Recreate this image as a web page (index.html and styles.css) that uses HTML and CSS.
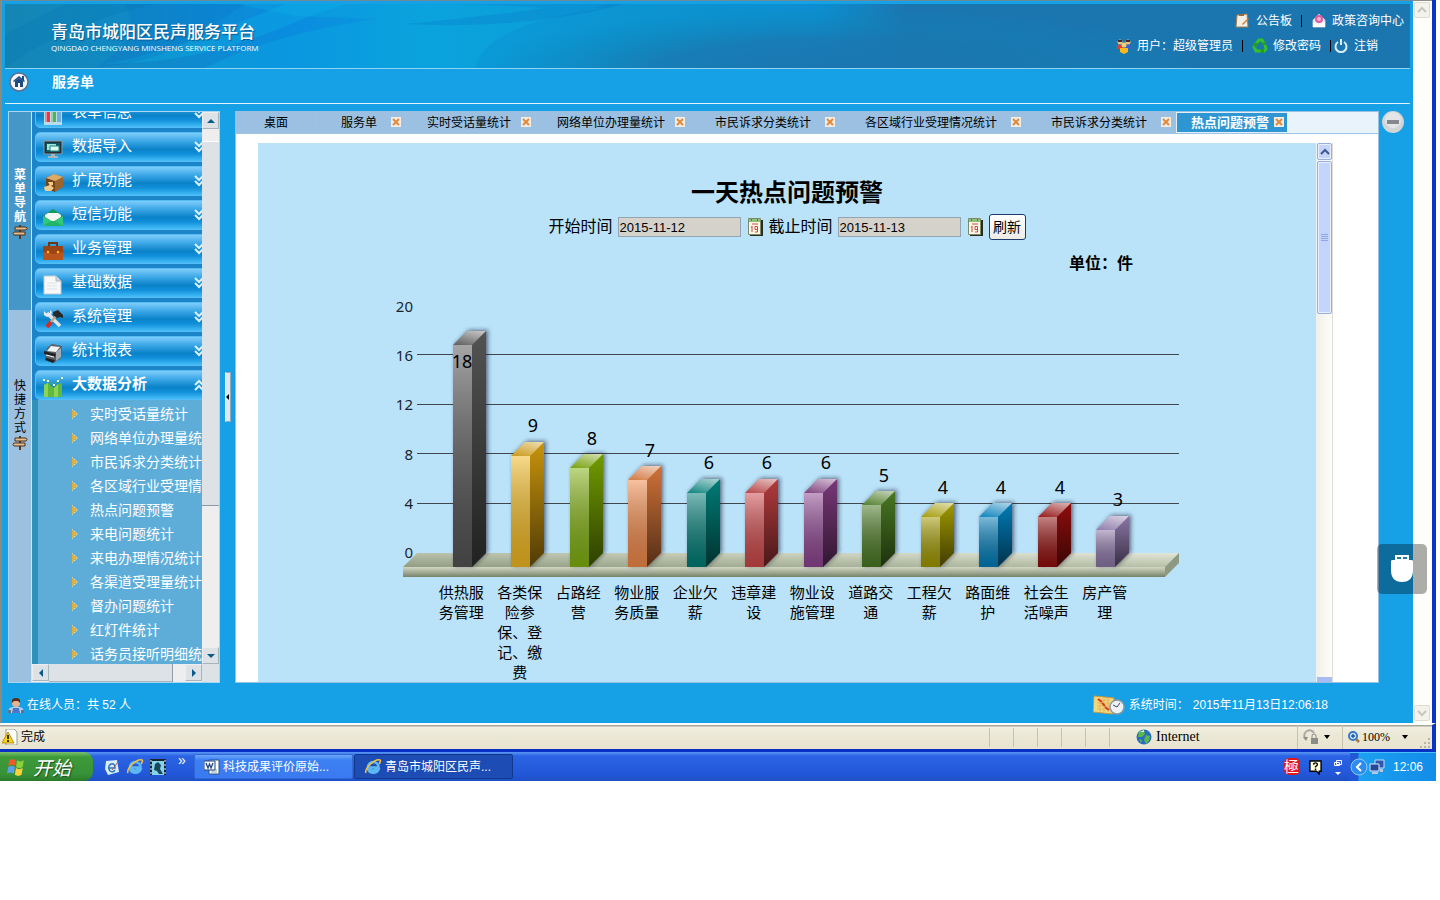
FILE: index.html
```html
<!DOCTYPE html>
<html lang="zh-CN">
<head>
<meta charset="utf-8">
<title>青岛市城阳区民声服务平台</title>
<link rel="stylesheet" href="styles.css">
</head>
<body>
<svg class="defs" aria-hidden="true">
  <defs>
    <symbol id="i-sign" viewBox="0 0 16 16"><path d="M7 1h2v14H7z" fill="#5b3a1e"/><path d="M3 3h11l1 1.500-1 1.500H3zM13 8H2L1 9.500 2 11h11z" fill="#e8bd92" stroke="#4d3018"/></symbol>
    <symbol id="i-down" viewBox="0 0 10 12"><path d="M1 1l4 4 4-4M1 6l4 4 4-4" fill="none" stroke="#d8f2ff" stroke-width="2"/></symbol>
    <symbol id="i-up" viewBox="0 0 10 12"><path d="M1 6l4-4 4 4M1 11l4-4 4 4" fill="none" stroke="#d8f2ff" stroke-width="2"/></symbol>
    <symbol id="i-x" viewBox="0 0 12 12"><path d="M1 0h10v10H1z" fill="#f1ece4"/><path d="M3 2l6 6M9 2L3 8" stroke="#e08a3c" stroke-width="2"/></symbol>
    <symbol id="i-cal" viewBox="0 0 15 18"><path d="M2 2h13v16H2z" fill="#2b2b20"/><path d="M.5.500h12v16H.500z" fill="#fbf7e8" stroke="#7c8a68"/><path d="M1 1h11v3H1z" fill="#8dc07a"/><path d="M3 2h1M9 2h1" stroke="#234"/><path d="M4 6h6M4 8v6M3 9h1M9.500 8.500H7v3h2.500zM9.500 11v3H7" fill="none" stroke="#cf4a40"/></symbol>
    <symbol id="i-ie" viewBox="0 0 18 18"><path d="M3.500 9.500h11C14.500 2 4 2.500 4 9.500c0 6.500 8.500 6.500 10.500 2h-3.500c-1.500 2-5 1-4.500-2" fill="none" stroke="#5db7f5" stroke-width="2.600"/><path d="M2 15C0 11 11 0 16 2c1 .5 0 3-1 4" fill="none" stroke="#f2c13c" stroke-width="1.600"/></symbol>
    <symbol id="i-dot" viewBox="0 0 8 12"><path d="M1 1l6 5-6 5z" fill="#f9efb0"/><path d="M1 3h2M1 5h4M1 7h4M1 9h2M2 2v8M4 4v4M6 5v2" stroke="#d59a18"/></symbol>
    <linearGradient id="g-front" x2="0" y2="1"><stop stop-color="#fff" stop-opacity=".48"/><stop offset="1" stop-color="#000" stop-opacity=".2"/></linearGradient>
    <linearGradient id="g-side" x2="0" y2="1"><stop stop-color="#000" stop-opacity="0"/><stop offset="1" stop-color="#000" stop-opacity=".6"/></linearGradient>
    <linearGradient id="g-top" x1=".2" y1="1" x2=".8" y2="0"><stop stop-color="#fff" stop-opacity=".1"/><stop offset="1" stop-color="#fff" stop-opacity=".65"/></linearGradient>
    <linearGradient id="g-floor" x1="0" y1="1" x2="1" y2="0"><stop stop-color="#919d83"/><stop offset=".5" stop-color="#b8c0a9"/><stop offset="1" stop-color="#e2e6d7"/></linearGradient>
    <linearGradient id="g-edge" x2="0" y2="1"><stop stop-color="#d2d7c4"/><stop offset="1" stop-color="#77826a"/></linearGradient>
    <linearGradient id="g-head"><stop stop-color="#1586b4"/><stop offset=".1" stop-color="#0f8ac8"/><stop offset=".2" stop-color="#0a8cdf"/><stop offset=".3" stop-color="#0a9cdc"/><stop offset=".45" stop-color="#0c94d0"/><stop offset=".58" stop-color="#0d8ed0"/><stop offset=".64" stop-color="#1b76b0"/><stop offset="1" stop-color="#1b76b0"/></linearGradient>
    <radialGradient id="g-headdark"><stop stop-color="#1b76b0"/><stop offset=".5" stop-color="#1a78b0" stop-opacity=".8"/><stop offset="1" stop-color="#0c88b8" stop-opacity="0"/></radialGradient>
    <filter id="shade" x="-30%" y="-10%" width="170%" height="120%"><feDropShadow dx="2" dy="-1" stdDeviation="2" flood-color="#223" flood-opacity=".6"/></filter>
  </defs>
</svg>

<div class="screen">
  <div class="browser">
    <div class="app">
      <header class="banner">
        <svg class="banner-art" viewBox="0 0 1405 64" preserveAspectRatio="none" aria-hidden="true">
          <path d="M0 0h1405v64H0z" fill="url(#g-head)"/>
          <ellipse cx="830" cy="66" rx="360" ry="62" fill="url(#g-headdark)"/>
          <path d="M230 0H600Q540 20 450 18 Q350 14 290 12zM200 64Q300 12 500 4L600 4Q480 20 470 64z" fill="#0cb4e2" opacity=".3"/>
          <path d="M300 14L340 0H280Q160 50 100 60Q200 60 300 14z" fill="#0cc0ea" opacity=".25"/>
          <path d="M430 0H620Q520 26 400 20Q500 10 540 4Q480 0 430 0zM120 0h120l-60 40q-40 20-90 24 50-30 30-64z" fill="#0670c8" opacity=".25"/>
          <path d="M0 64Q60 20 150 0H60L0 30z" fill="#0678b4" opacity=".3"/>
        </svg>
        <div class="brand">
          <h1 class="brand-name">青岛市城阳区民声服务平台</h1>
          <p class="brand-en">QINGDAO CHENGYANG MINSHENG SERVICE PLATFORM</p>
        </div>
        <div class="account">
          <div class="account-row">
            <svg class="ic16" viewBox="0 0 16 16"><path d="M2 2l10-1 1 13H1z" fill="#f2efe6" stroke="#a77b4a"/><path d="M4 1h5v2H4z" fill="#9a6a3c"/><path d="M7 11l6-6 1 1-6 6z" fill="#d97b2d"/></svg>
            <a href="#">公告板</a><span class="bar-sep"></span>
            <svg class="ic16" viewBox="0 0 16 16"><path d="M2 7l6-6 6 6v7H2z" fill="#efeff6" stroke="#c2c4d4"/><circle cx="8" cy="6" r="4" fill="#e05aa0"/><circle cx="8" cy="6" r="2" fill="#f8b6d4"/><path d="M2 9l6 3 6-3v5H2z" fill="#fff"/></svg>
            <a href="#">政策咨询中心</a>
          </div>
          <div class="account-row account-row-user">
            <svg class="ic16" viewBox="0 0 16 16"><circle cx="4" cy="4" r="2.500" fill="#f0c080"/><circle cx="12" cy="4" r="2.500" fill="#f0c080"/><path d="M2 2h4v2H2zM10 2h4v2h-4z" fill="#4a2a20"/><path d="M1 7h6v4H1z" fill="#e04030"/><path d="M9 7h6v4H9z" fill="#3a62c8"/><circle cx="8" cy="7" r="2.500" fill="#f5cf7a"/><path d="M4 10h8v4l-4 2-4-2z" fill="#f6b81c"/></svg>
            <span>用户：超级管理员</span><span class="bar-sep"></span>
            <svg class="ic16" viewBox="0 0 16 16"><path d="M4 6l3-4h3l2 3M13 7l1 4-3 3M9 13H4l-2-4 2-2" fill="none" stroke="#35c02c" stroke-width="3"/><path d="M14 2v5H9zM12 10l-4 3 4 3zM1 5h6L3 10z" fill="#239c20"/></svg>
            <a href="#">修改密码</a><span class="bar-sep bar-sep-tight"></span>
            <svg class="ic16" viewBox="0 0 16 16"><path d="M5 4a5.500 5.500 0 1 0 6 0M8 1v6" fill="none" stroke="#d9edf6" stroke-width="2"/></svg>
            <a href="#">注销</a>
          </div>
        </div>
      </header>

      <nav class="crumb">
        <svg class="home" viewBox="0 0 20 20"><circle cx="10" cy="10" r="9" fill="#f4f5f8" stroke="#5c6e90" stroke-width="1.500"/><path d="M10 4l6 5-1 1-5-4-5 4-1-1z" fill="#1d4a80"/><path d="M13 4h2v4h-2z" fill="#1d4a80"/><path d="M6 9l4-3 4 3v6h-3v-4H9v4H6z" fill="#1d4a80"/></svg>
        <a href="#" class="crumb-link">服务单</a>
      </nav>

      <div class="work">
        <aside class="side">
          <div class="rail">
            <button class="rail-tab rail-tab-on"><span class="rail-text">菜单导航</span><svg class="ic16"><use href="#i-sign"/></svg></button>
            <button class="rail-tab"><span class="rail-text">快捷方式</span><svg class="ic16"><use href="#i-sign"/></svg></button>
          </div>
          <div class="side-view">
            <div class="side-body">
              <div class="menu">
                <ul class="menu-list">
                  <li><button class="menu-item"><svg class="mi" viewBox="0 0 20 20"><path d="M1 0h18v20H1z" fill="#b9dcef"/><path d="M2 6h5v11H2z" fill="#e23b4a"/><path d="M8 4h5v13H8z" fill="#4eb35c"/><path d="M14 2h4v15h-4z" fill="#72acd8"/><path d="M2 6h2v11H2zM8 4h2v13H8z" fill="#fff" opacity=".4"/></svg><span class="menu-name">表单信息</span><svg class="chev"><use href="#i-down"/></svg></button></li>
                  <li><button class="menu-item"><svg class="mi" viewBox="0 0 20 20"><path d="M1 2h18v13H1z" fill="#23323a" stroke="#8aa0a8"/><path d="M3 4h14v9H3z" fill="#0d5a66"/><path d="M4 5h9v6H4z" fill="#9be8d8"/><path d="M7 7h9v5H7z" fill="#d8fff2" stroke="#2a7d7a"/><path d="M8 15h4v2h3v2H5v-2h3z" fill="#a8b4ba"/></svg><span class="menu-name">数据导入</span><svg class="chev"><use href="#i-down"/></svg></button></li>
                  <li><button class="menu-item"><svg class="mi" viewBox="0 0 20 20"><path d="M3 5l8-4 9 3v10l-8 5-9-4z" fill="#9a642c"/><path d="M3 5l9 3v11l-9-4z" fill="#714317"/><path d="M3 5l8-4 9 3-8 4z" fill="#dcab68"/><path d="M5 9h5v3l-3 1zM1 14l6-2 4 3-3 3-6 0z" fill="#f0c98c"/></svg><span class="menu-name">扩展功能</span><svg class="chev"><use href="#i-down"/></svg></button></li>
                  <li><button class="menu-item"><svg class="mi" viewBox="0 0 20 20"><path d="M0 9l10-7 10 7v10H0z" fill="#159a58"/><path d="M2 8l3-2h10l3 2v2l-8 5-8-5z" fill="#f5f7f4"/><path d="M0 9l10 6 10-6v10H0z" fill="#30c87a"/><path d="M0 19l8-5h4l8 5z" fill="#22b469"/></svg><span class="menu-name">短信功能</span><svg class="chev"><use href="#i-down"/></svg></button></li>
                  <li><button class="menu-item"><svg class="mi" viewBox="0 0 20 20"><path d="M6 5V2h8v3" fill="none" stroke="#6d3514" stroke-width="2"/><path d="M0 5h20v14H0z" fill="#b8541c"/><path d="M0 5h20v6l-10 2L0 11z" fill="#9a4315"/><circle cx="5" cy="11" r="1.300" fill="#f3b62c"/><circle cx="15" cy="11" r="1.300" fill="#f3b62c"/></svg><span class="menu-name">业务管理</span><svg class="chev"><use href="#i-down"/></svg></button></li>
                  <li><button class="menu-item"><svg class="mi" viewBox="0 0 20 20"><path d="M1 1h12l5 5v13H1z" fill="#f8f8f8" stroke="#c4ccd2"/><path d="M13 1v5h5" fill="#d2d8dc" stroke="#adb7be"/><path d="M4 8h10M4 11h10M4 14h10" stroke="#dde3e8"/></svg><span class="menu-name">基础数据</span><svg class="chev"><use href="#i-down"/></svg></button></li>
                  <li><button class="menu-item"><svg class="mi" viewBox="0 0 20 20"><path d="M4 4l13 13" stroke="#dfe3e6" stroke-width="3.500"/><path d="M1 2v4l3 2 4-2 1-3-2-2v3l-3 1z" fill="#e8ecee"/><path d="M13 7l-6 7" stroke="#c9a98a" stroke-width="2.500"/><path d="M8 13l-4 5" stroke="#d82a20" stroke-width="4"/><path d="M10 3l5-2 5 5v3l-3-1-3 1-4-3z" fill="#26282a"/></svg><span class="menu-name">系统管理</span><svg class="chev"><use href="#i-down"/></svg></button></li>
                  <li><button class="menu-item"><svg class="mi" viewBox="0 0 20 20"><path d="M4 5l5-4 10 2-1 12-7 5-9-4z" fill="#5a6064"/><path d="M8 3l9 1-4 5-9-1z" fill="#f0f2f3"/><path d="M1 8l12 3-1 3-11-3zM3 15l9 2-2 3-8-3z" fill="#1f2326"/><path d="M13 9l5-4v9l-5 4z" fill="#a4abb0"/><path d="M3 12l8 2" stroke="#fff"/></svg><span class="menu-name">统计报表</span><svg class="chev"><use href="#i-down"/></svg></button></li>
                  <li><button class="menu-item menu-item-open"><svg class="mi" viewBox="0 0 20 20"><path d="M1 8l4-2 6 5 4-4 4-1v14H1z" fill="#62b83c"/><path d="M1 8l4-2v14H1zM11 11l4-4v13h-4z" fill="#8ad45a"/><path d="M1 3l4 1 6 4 4-4 4-3" fill="none" stroke="#5db04a"/><path d="M0 2h2v2H0zM4 3h2v2H4zM10 7h2v2h-2zM14 3h2v2h-2zM18 0h2v2h-2z" fill="#e8ffe0"/></svg><span class="menu-name">大数据分析</span><svg class="chev"><use href="#i-up"/></svg></button>
                    <ul class="sub">
                      <li><a href="#"><svg class="dot"><use href="#i-dot"/></svg>实时受话量统计</a></li>
                      <li><a href="#"><svg class="dot"><use href="#i-dot"/></svg>网络单位办理量统计</a></li>
                      <li><a href="#"><svg class="dot"><use href="#i-dot"/></svg>市民诉求分类统计</a></li>
                      <li><a href="#"><svg class="dot"><use href="#i-dot"/></svg>各区域行业受理情况统计</a></li>
                      <li><a href="#"><svg class="dot"><use href="#i-dot"/></svg>热点问题预警</a></li>
                      <li><a href="#"><svg class="dot"><use href="#i-dot"/></svg>来电问题统计</a></li>
                      <li><a href="#"><svg class="dot"><use href="#i-dot"/></svg>来电办理情况统计</a></li>
                      <li><a href="#"><svg class="dot"><use href="#i-dot"/></svg>各渠道受理量统计</a></li>
                      <li><a href="#"><svg class="dot"><use href="#i-dot"/></svg>督办问题统计</a></li>
                      <li><a href="#"><svg class="dot"><use href="#i-dot"/></svg>红灯件统计</a></li>
                      <li><a href="#"><svg class="dot"><use href="#i-dot"/></svg>话务员接听明细统计</a></li>
                    </ul>
                  </li>
                </ul>
              </div>
              <div class="vbar">
                <button class="sb" aria-label="向上"><svg viewBox="0 0 8 8"><path d="M0 6l4-4 4 4z"/></svg></button>
                <span class="vbar-gap"></span><span class="vbar-thumb"></span><span class="vbar-rest"></span>
                <button class="sb" aria-label="向下"><svg viewBox="0 0 8 8"><path d="M0 2l4 4 4-4z"/></svg></button>
              </div>
            </div>
            <div class="hbar">
              <button class="sb" aria-label="向左"><svg viewBox="0 0 8 8"><path d="M6 0L2 4l4 4z"/></svg></button>
              <span class="hbar-thumb"></span><span class="hbar-rest"></span>
              <button class="sb" aria-label="向右"><svg viewBox="0 0 8 8"><path d="M2 0l4 4-4 4z"/></svg></button>
              <span class="hbar-corner"></span>
            </div>
          </div>
        </aside>

        <button class="splitter" aria-label="收起菜单"><svg viewBox="0 0 4 8"><path d="M4 0L0 4l4 4z"/></svg></button>

        <main class="main">
          <div class="tabs">
            <div class="tab tab-home"><button class="tab-name">桌面</button></div>
            <div class="tab"><button class="tab-name">服务单</button><button class="tab-x" aria-label="关闭"><svg><use href="#i-x"/></svg></button></div>
            <div class="tab tab-tight"><button class="tab-name">实时受话量统计</button><button class="tab-x" aria-label="关闭"><svg><use href="#i-x"/></svg></button></div>
            <div class="tab tab-tight"><button class="tab-name">网络单位办理量统计</button><button class="tab-x" aria-label="关闭"><svg><use href="#i-x"/></svg></button></div>
            <div class="tab"><button class="tab-name">市民诉求分类统计</button><button class="tab-x" aria-label="关闭"><svg><use href="#i-x"/></svg></button></div>
            <div class="tab"><button class="tab-name">各区域行业受理情况统计</button><button class="tab-x" aria-label="关闭"><svg><use href="#i-x"/></svg></button></div>
            <div class="tab"><button class="tab-name">市民诉求分类统计</button><button class="tab-x" aria-label="关闭"><svg><use href="#i-x"/></svg></button></div>
            <div class="tab tab-on"><button class="tab-name">热点问题预警</button><button class="tab-x" aria-label="关闭"><svg><use href="#i-x"/></svg></button></div>
          </div>
          <div class="frame">
            <section class="report">
              <h2 class="report-title">一天热点问题预警</h2>
              <form class="filter">
                <label for="from">开始时间</label><input id="from" type="text" value="2015-11-12">
                <svg class="cal"><use href="#i-cal"/></svg>
                <label for="to">截止时间</label><input id="to" type="text" value="2015-11-13">
                <svg class="cal"><use href="#i-cal"/></svg>
                <button type="button" class="refresh">刷新</button>
              </form>
              <div class="chart">
                <p class="unit">单位：件</p>
                <svg class="plot" viewBox="387 290 800 290" role="img" aria-label="热点问题柱状图">
                  <g stroke="#40464c"><path d="M417 354.500h762M417 404.500h762M417 453.500h762M417 503.500h762"/></g>
                  <path d="M403 567l14-14h762l-14 14z" fill="url(#g-floor)"/>
                  <path d="M403 567h762v10H403z" fill="url(#g-edge)"/>
                  <path d="M1165 567l14-14v10l-14 14z" fill="#8d9980"/>
                  <g class="axis"><text x="413" y="312">20</text><text x="413" y="361">16</text><text x="413" y="410">12</text><text x="413" y="460">8</text><text x="413" y="509">4</text><text x="413" y="558">0</text></g>
                  <g transform="translate(453 567)" fill="#525252"><path d="M0 0v-222l14-14h19v222l-14 14z" filter="url(#shade)"/><path d="M0 0v-222h19v222z" fill="url(#g-front)"/><path d="M19 0v-222l14-14v222z" fill="url(#g-side)"/><path d="M0-222l14-14h19l-14 14z" fill="url(#g-top)"/></g>
                  <g transform="translate(511 567)" fill="#c89408"><path d="M0 0v-111l14-14h19v111l-14 14z" filter="url(#shade)"/><path d="M0 0v-111h19v111z" fill="#f0b820"/><path d="M0 0v-111h19v111z" fill="url(#g-front)"/><path d="M19 0v-111l14-14v111z" fill="url(#g-side)"/><path d="M0-111l14-14h19l-14 14z" fill="url(#g-top)"/></g>
                  <g transform="translate(570 567)" fill="#6f9c00"><path d="M0 0v-99l14-14h19v99l-14 14z" filter="url(#shade)"/><path d="M0 0v-99h19v99z" fill="#80b010"/><path d="M0 0v-99h19v99z" fill="url(#g-front)"/><path d="M19 0v-99l14-14v99z" fill="url(#g-side)"/><path d="M0-99l14-14h19l-14 14z" fill="url(#g-top)"/></g>
                  <g transform="translate(628 567)" fill="#d07238"><path d="M0 0v-87l14-14h19v87l-14 14z" filter="url(#shade)"/><path d="M0 0v-87h19v87z" fill="#f08848"/><path d="M0 0v-87h19v87z" fill="url(#g-front)"/><path d="M19 0v-87l14-14v87z" fill="url(#g-side)"/><path d="M0-87l14-14h19l-14 14z" fill="url(#g-top)"/></g>
                  <g transform="translate(687 567)" fill="#007c76"><path d="M0 0v-74l14-14h19v74l-14 14z" filter="url(#shade)"/><path d="M0 0v-74h19v74z" fill="url(#g-front)"/><path d="M19 0v-74l14-14v74z" fill="url(#g-side)"/><path d="M0-74l14-14h19l-14 14z" fill="url(#g-top)"/></g>
                  <g transform="translate(745 567)" fill="#b23a3e"><path d="M0 0v-74l14-14h19v74l-14 14z" filter="url(#shade)"/><path d="M0 0v-74h19v74z" fill="#cc4648"/><path d="M0 0v-74h19v74z" fill="url(#g-front)"/><path d="M19 0v-74l14-14v74z" fill="url(#g-side)"/><path d="M0-74l14-14h19l-14 14z" fill="url(#g-top)"/></g>
                  <g transform="translate(804 567)" fill="#783878"><path d="M0 0v-74l14-14h19v74l-14 14z" filter="url(#shade)"/><path d="M0 0v-74h19v74z" fill="#8c4490"/><path d="M0 0v-74h19v74z" fill="url(#g-front)"/><path d="M19 0v-74l14-14v74z" fill="url(#g-side)"/><path d="M0-74l14-14h19l-14 14z" fill="url(#g-top)"/></g>
                  <g transform="translate(862 567)" fill="#4a7820"><path d="M0 0v-62l14-14h19v62l-14 14z" filter="url(#shade)"/><path d="M0 0v-62h19v62z" fill="url(#g-front)"/><path d="M19 0v-62l14-14v62z" fill="url(#g-side)"/><path d="M0-62l14-14h19l-14 14z" fill="url(#g-top)"/></g>
                  <g transform="translate(921 567)" fill="#a09800"><path d="M0 0v-50l14-14h19v50l-14 14z" filter="url(#shade)"/><path d="M0 0v-50h19v50z" fill="url(#g-front)"/><path d="M19 0v-50l14-14v50z" fill="url(#g-side)"/><path d="M0-50l14-14h19l-14 14z" fill="url(#g-top)"/></g>
                  <g transform="translate(979 567)" fill="#007cb8"><path d="M0 0v-50l14-14h19v50l-14 14z" filter="url(#shade)"/><path d="M0 0v-50h19v50z" fill="url(#g-front)"/><path d="M19 0v-50l14-14v50z" fill="url(#g-side)"/><path d="M0-50l14-14h19l-14 14z" fill="url(#g-top)"/></g>
                  <g transform="translate(1038 567)" fill="#900a10"><path d="M0 0v-50l14-14h19v50l-14 14z" filter="url(#shade)"/><path d="M0 0v-50h19v50z" fill="url(#g-front)"/><path d="M19 0v-50l14-14v50z" fill="url(#g-side)"/><path d="M0-50l14-14h19l-14 14z" fill="url(#g-top)"/></g>
                  <g transform="translate(1096 567)" fill="#8a74a6"><path d="M0 0v-37l14-14h19v37l-14 14z" filter="url(#shade)"/><path d="M0 0v-37h19v37z" fill="url(#g-front)"/><path d="M19 0v-37l14-14v37z" fill="url(#g-side)"/><path d="M0-37l14-14h19l-14 14z" fill="url(#g-top)"/></g>
                  <g class="value"><text x="462" y="368">18</text><text x="533" y="432">9</text><text x="592" y="445">8</text><text x="650" y="457">7</text><text x="709" y="469">6</text><text x="767" y="469">6</text><text x="826" y="469">6</text><text x="884" y="482">5</text><text x="943" y="494">4</text><text x="1001" y="494">4</text><text x="1060" y="494">4</text><text x="1118" y="506">3</text></g>
                </svg>
                <ul class="cats">
                  <li>供热服务管理</li><li>各类保险参保、登记、缴费</li><li>占路经营</li><li>物业服务质量</li><li>企业欠薪</li><li>违章建设</li><li>物业设施管理</li><li>道路交通</li><li>工程欠薪</li><li>路面维护</li><li>社会生活噪声</li><li>房产管理</li>
                </ul>
              </div>
            </section>
            <div class="xp-scroll">
              <button class="xp-btn" aria-label="向上"><svg viewBox="0 0 10 8"><path d="M1 6l4-4 4 4" fill="none" stroke="#3f5a8c" stroke-width="2"/></svg></button>
              <span class="xp-thumb"><svg viewBox="0 0 8 8"><path d="M0 .500h7M0 2.500h7M0 4.500h7M0 6.500h7" stroke="#8fa8e8"/></svg></span>
              <span class="xp-next"></span>
            </div>
          </div>
        </main>
        <button class="collapse" aria-label="收起"><svg viewBox="0 0 22 22"><circle cx="11" cy="11" r="11" fill="#d2d4d6"/><circle cx="11" cy="9" r="8" fill="#e4e5e7"/><path d="M5 9h12v4H5z" fill="#84888c"/></svg></button>
      </div>

      <footer class="foot">
        <svg class="ic16" viewBox="0 0 16 16"><path d="M0 16q0-6 5-6h6q5 0 5 6z" fill="#b9cdf0"/><path d="M4 16l1-5h6l1 5z" fill="#4a78c8"/><circle cx="8" cy="6" r="4" fill="#e8b48c"/><path d="M4 6q-1-5 4-5t4 5l-2-2H6z" fill="#5a2c18"/><path d="M0 13h3v3H0zM13 13h3v3h-3z" fill="#6a7080"/></svg>
        <span>在线人员：共 52 人</span>
        <span class="clock">
          <svg class="clock-ic" viewBox="0 0 32 20"><path d="M1 1l20 2-1 16-20-2z" fill="#f4d77c" stroke="#c89a3c"/><path d="M4 5h13M4 8h13M4 11h13M4 14h13M7 3v14M11 3v14M15 3v14" stroke="#dcb860"/><path d="M5 4l4 3M9 8l3 3M12 12l4 3" stroke="#d83a28" stroke-width="2"/><circle cx="24" cy="12" r="7" fill="#eef2f4" stroke="#8c9aa4" stroke-width="1.500"/><path d="M20 10l4 2 3-4" fill="none" stroke="#445"/></svg>
          <span>系统时间：</span><time>2015年11月13日12:06:18</time>
        </span>
      </footer>
    </div>
    <div class="page-scroll">
      <button class="ps-btn" aria-label="页面向上"><svg viewBox="0 0 10 8"><path d="M1 6l4-4 4 4" fill="none" stroke="#c6c6bc" stroke-width="2"/></svg></button>
      <button class="ps-btn" aria-label="页面向下"><svg viewBox="0 0 10 8"><path d="M1 2l4 4 4-4" fill="none" stroke="#c6c6bc" stroke-width="2"/></svg></button>
    </div>
    <button class="mouse" aria-label="鼠标工具"><svg viewBox="0 0 24 28"><path d="M5 0h14v6H5z" fill="#fff"/><path d="M7 2h4v2H7zM13 2h4v2h-4z" fill="#2a7a9c"/><path d="M1 6q0-1 2-1h18q2 0 2 1v9q0 12-11 12T1 15z" fill="#fff"/></svg></button>
  </div>

  <div class="status">
    <svg class="ic16" viewBox="0 0 16 16"><path d="M4 0h8l3 3v13H4z" fill="#fff" stroke="#9a9a90"/><path d="M6 3l6 11H0z" fill="#f8d21c" stroke="#b8900a"/><path d="M6 6v4M6 11v2" stroke="#000" stroke-width="1.500"/></svg>
    <span>完成</span>
    <span class="cells"><i></i><i></i><i></i><i></i><i></i><i></i></span>
    <span class="zone">
      <svg class="ic16" viewBox="0 0 16 16"><circle cx="8" cy="8" r="7.500" fill="#2a6cc0"/><path d="M3 2l5-1 1 4-3 3-4 0zM10 6l4 1-1 5-3 3-2-4zM3 10l3 1-1 3z" fill="#58b848"/><path d="M4 3l4-2v2z" fill="#d4f0ff"/></svg>
      <span>Internet</span>
    </span>
    <span class="lock">
      <svg class="ic16" viewBox="0 0 16 16"><path d="M2 9a5 5 0 0 1 9-5" fill="none" stroke="#a9aaa4" stroke-width="2"/><path d="M0 8h5l-2 4z" fill="#8e908a"/><path d="M9 9V7a2 2 0 0 1 4 0v2" fill="none" stroke="#888"/><path d="M8 9h7v6H8z" fill="#8a8c88"/></svg>
      <svg class="tri" viewBox="0 0 6 4"><path d="M0 0h6L3 4z"/></svg>
    </span>
    <span class="zoom">
      <svg class="ic12" viewBox="0 0 12 14"><path d="M7 8l4 4" stroke="#a8783c" stroke-width="2.500"/><circle cx="5" cy="6" r="4" fill="#dcefff" stroke="#3876c0" stroke-width="2"/><path d="M3 6h4M5 4v4" stroke="#1a58a8" stroke-width="1.500"/></svg>
      <span>100%</span>
      <svg class="tri" viewBox="0 0 6 4"><path d="M0 0h6L3 4z"/></svg>
    </span>
    <svg class="grip" viewBox="0 0 12 12"><path d="M9 1h2v2H9zM5 5h2v2H5zM9 5h2v2H9zM1 9h2v2H1zM5 9h2v2H5zM9 9h2v2H9z" fill="#b8b4a2"/></svg>
  </div>

  <div class="taskbar">
    <button class="start">
      <svg class="flag" viewBox="0 0 18 18"><path d="M3 3q3-2 6 0L8 8Q5 6 2 8z" fill="#ee5a2c"/><path d="M10 3q3 2 6 0l-1 6q-3 2-6 0z" fill="#8cd03c"/><path d="M2 9q3-2 6 0l-1 6q-3-2-6 0z" fill="#5ea0f0"/><path d="M9 10q3 2 6 0l-1 6q-3 2-6 0z" fill="#fad23c"/></svg>
      <span>开始</span>
    </button>
    <div class="quick">
      <svg class="ic16" viewBox="0 0 16 16"><path d="M2 2l11-1 2 12-11 3-3-6z" fill="#d9ecf7"/><path d="M4 9h7q0-5-4-4-4 2-1 7 3 2 5-1" fill="none" stroke="#2a78c0" stroke-width="1.500"/><path d="M8 11l6-8" stroke="#c8503a"/></svg>
      <svg class="ic18"><use href="#i-ie"/></svg>
      <svg class="ic16" viewBox="0 0 16 16"><path d="M0 0h16v16H0z" fill="#84d2f0"/><path d="M1 0v16M15 0v16" stroke="#16242c" stroke-width="2"/><path d="M1 1v15M15 1v15" stroke="#e8f4f8" stroke-dasharray="2 2"/><path d="M2 0h12v2H2z" fill="#16242c"/><path d="M5 5l3-2 3 3-1 4 3 5H9l-2-3-3-1z" fill="#1a4858"/></svg>
      <span class="more">»</span>
    </div>
    <button class="task"><svg class="ic16" viewBox="0 0 16 16"><path d="M5 1h10v14H5z" fill="#fff" stroke="#31538f"/><path d="M7 11h6M7 13h6" stroke="#8aa"/><path d="M0 2h11v9H0z" fill="#f4f8ff" stroke="#27477f"/><path d="M2 4l2 5 1.500-4L7 9l2-5" fill="none" stroke="#27477f" stroke-width="1.300"/></svg><span>科技成果评价原始...</span></button>
    <button class="task task-on"><svg class="ic18"><use href="#i-ie"/></svg><span>青岛市城阳区民声...</span></button>
    <div class="ime">
      <span class="ime-seal">極</span>
      <svg class="ic14" viewBox="0 0 14 15"><path d="M1 1h12v11h-2v3l-3-3H1z" fill="#fffde0" stroke="#000" stroke-width="1.500"/><path d="M5 5q0-2 2-2t2 2q0 1-2 2v1M7 9v2" fill="none" stroke="#000" stroke-width="1.500"/></svg>
      <svg class="ic-rest" viewBox="0 0 10 16"><path d="M3.500 1.500h5v4h-5zM1.500 3.500h5v3h-5z" fill="#2a62d8" stroke="#fff"/><path d="M2 13h6l-3 3z" fill="#fff"/></svg>
    </div>
    <div class="tray">
      <button class="tray-more" aria-label="显示隐藏的图标"><svg viewBox="0 0 18 18"><circle cx="9" cy="9" r="8" fill="#2c8cf0" stroke="#8cc8ff"/><path d="M11 5L7 9l4 4" fill="none" stroke="#fff" stroke-width="2"/></svg></button>
      <svg class="ic16" viewBox="0 0 16 16"><path d="M6 1h9v8H6z" fill="#2c58b0" stroke="#c8d8f0"/><path d="M1 5h9v7H1z" fill="#24489c" stroke="#dfe8f6"/><path d="M3 13h6v2H3zM11 10h3v3h-3z" fill="#b8c8dc"/></svg>
      <time>12:06</time>
    </div>
  </div>
</div>
</body>
</html>
```
FILE: styles.css
```css
* { box-sizing: border-box; }
body, h1, h2, p, ul { margin: 0; padding: 0; }
ul { list-style: none; }
body {
  background: #fff;
  font: 12px/16px "Liberation Sans", "Noto Sans CJK SC", sans-serif;
  color: #000;
}
button { border: 0; padding: 0; margin: 0; background: none; font: inherit; color: inherit; cursor: pointer; }
a { color: inherit; text-decoration: none; }
svg { display: block; flex: none; }
.defs { position: absolute; width: 0; height: 0; }
.ic12 { width: 12px; height: 14px; }
.ic14 { width: 13px; height: 16px; }
.ic16 { width: 16px; height: 16px; }
.ic18 { width: 18px; height: 18px; }

.screen { display: flex; flex-direction: column; height: calc(100vh - 119px); margin-right: 4px; }
.browser {
  position: relative;
  display: flex;
  flex: 1;
  min-height: 0;
  border-right: 4px solid #0a34c8;
}
.app {
  display: flex;
  flex-direction: column;
  flex: 1;
  min-width: 0;
  padding: 3px 3px 0;
  border-top: 1px solid #6f8a94;
  border-left: 2px solid #8a8a80;
  background: #16a0e6;
}

/* banner */
.banner {
  position: relative;
  display: flex;
  justify-content: space-between;
  height: 65px;
  border-bottom: 1px solid #8fd4f8;
}
.banner-art { position: absolute; inset: 0; width: 100%; height: 100%; }
.brand { position: relative; padding: 16px 0 0 46px; color: #fff; }
.brand-name { font: 500 17px/22px "Noto Sans CJK SC", sans-serif; text-shadow: 1px 1px 1px #0a5a90; white-space: nowrap; }
.brand-en { padding-top: 1px; font: 400 8px/10px "Open Sans", sans-serif; white-space: nowrap; }
.account { position: relative; display: flex; flex-direction: column; gap: 9px; padding: 9px 6px 0 0; color: #fff; }
.account-row { display: flex; align-items: center; justify-content: flex-end; gap: 5px; }
.account-row-user { padding-right: 26px; }
.bar-sep { width: 1px; height: 12px; margin: 0 4px; background: #000; }
.bar-sep-tight { margin-right: -3px; }

/* breadcrumb */
.crumb {
  display: flex;
  align-items: center;
  gap: 23px;
  height: 35px;
  padding: 0 0 8px 4px;
  border-bottom: 1px solid #e4f4fc;
}
.home { width: 20px; height: 20px; }
.crumb-link { color: #fff; font-size: 14px; font-weight: 700; }

/* work area */
.work { display: flex; flex: 1; min-height: 0; padding: 7px 0 0 3px; }
.side { display: flex; width: 212px; flex: none; border: 1px solid #a9d5f2; }
.rail { display: flex; flex-direction: column; width: 23px; background: #9cc0e0; border-right: 1px solid #cfe6f6; }
.rail-tab { display: flex; flex-direction: column; align-items: center; flex: 1; padding-top: 69px; font-size: 12px; }
.rail-tab-on { flex: 0 0 198px; padding-top: 56px; background: #4597c8; color: #fff; font-weight: 700; }
.rail-text { width: 12px; line-height: 14px; }
.side-view { display: flex; flex-direction: column; flex: 1; min-width: 0; }
.side-body { display: flex; flex: 1; min-height: 0; }
.menu { flex: 1; min-width: 0; overflow: hidden; padding-left: 3px; background: #1c84c8; }
.menu-list { width: 173px; margin-top: -14px; color: #fff; }
.menu-item {
  display: flex;
  align-items: center;
  width: 100%;
  height: 30px;
  margin-bottom: 4px;
  padding: 0 3px 0 7px;
  border: 1px solid #55bdf5;
  border-radius: 5px;
  background: linear-gradient(#7dcdfb, #3aa6e6 30%, #0a82c8 58%, #1190da 75%, #45bdf8);
  font-size: 15px;
  text-align: left;
}
.menu-item-open { margin-bottom: 0; font-weight: 700; }
.mi { width: 20px; height: 20px; margin: 4px 9px 0 0; }
.menu-name { flex: 1; line-height: 26px; padding-bottom: 2px; }
.chev { width: 10px; height: 12px; }
.sub { margin-left: 3px; padding-top: 2px; background: #5eadd9; box-shadow: -6px 0 0 #2f90ba; }
.sub a { display: flex; align-items: center; gap: 11px; padding-left: 33px; font-size: 14px; line-height: 24px; white-space: nowrap; }
.dot { width: 8px; height: 12px; }

.vbar { display: flex; flex-direction: column; width: 17px; background: #eee; }
.hbar { display: flex; height: 18px; background: #eee; }
.sb { display: flex; align-items: center; justify-content: center; flex: none; width: 17px; height: 17px; border: 1px solid #a8b4bc; border-top-color: #eee; border-left-color: #eee; background: #dde2e6; }
.sb svg { width: 8px; height: 8px; fill: #0a5a8c; }
.vbar-gap { height: 12px; }
.vbar-thumb { flex: 366; background: #dde2e6; border-bottom: 1px solid #8c9aa4; border-top: 1px solid #fff; }
.vbar-rest { flex: 142; }
.hbar-thumb { flex: 125; background: #dde2e6; border-right: 1px solid #8c9aa4; border-bottom: 1px solid #a8b4bc; }
.hbar-rest { flex: 12; }
.hbar-corner { width: 17px; background: #dde2e6; }

.splitter { align-self: center; flex: none; width: 6px; height: 50px; margin: 0 4px 0 5px; border: 1px solid #8fa8c0; border-left: 1px solid #fff; background: #dce8f2; }
.splitter svg { width: 3px; height: 6px; }

/* tabs */
.main { display: flex; flex-direction: column; flex: 1; min-width: 0; border: 1px solid #9cc0e4; background: #fff; }
.tabs { display: flex; height: 22px; border-bottom: 1px solid #9cc4e8; background: #e8f3fc; white-space: nowrap; overflow: hidden; }
.tab { display: flex; align-items: center; flex: none; padding: 0 3px 0 25px; border-right: 1px solid #b4bcc8; background: #9cc0e2; }
.tab-home { padding: 0 27px 0 28px; }
.tab-x { margin-left: 13px; }
.tab-x svg { width: 12px; height: 12px; }
.tab-tight { padding-left: 21px; }
.tab-tight .tab-x { margin-left: 9px; }
.tab-on { padding: 0 2px 0 14px; border: 1px solid #e4eef8; background: #2e96d2; color: #fff; font-size: 13px; font-weight: 700; }
.tab-on .tab-x { margin-left: 4px; }

/* report */
.frame { display: flex; flex: 1; min-height: 0; padding: 9px 45px 0 22px; }
.report { flex: 1; min-width: 0; overflow: hidden; padding-top: 31px; background: #bae3f9; }
.report-title { font: 700 24px/34px "Noto Sans CJK SC", sans-serif; text-align: center; }
.filter { display: flex; align-items: center; justify-content: center; height: 38px; font-size: 16px; }
.filter input { flex: none; width: 123px; height: 20px; margin: 0 7px 0 5px; padding: 0 1px; border: 1px solid #94a4b0; background: #d5d1cb; color: #000; font: 13px "Liberation Sans", sans-serif; }
.cal { width: 15px; height: 18px; margin-right: 6px; }
.refresh { width: 37px; height: 26px; border: 1px solid #1c3c6c; border-radius: 3px; background: linear-gradient(#fff, #ecebe4); font-size: 14px; }
.chart { width: 800px; margin: 0 auto; }
.unit { padding: 3px 54px 0 0; font: 700 16px/26px "Noto Sans CJK SC", sans-serif; text-align: right; }
.plot { width: 100%; height: 290px; margin-top: 15px; }
.axis text { font: 15px "Noto Sans", sans-serif; text-anchor: end; fill: #1c2430; }
.value text { font: 18px "Noto Sans", sans-serif; text-anchor: middle; fill: #000; }
.cats { display: grid; grid-template-columns: repeat(12, 1fr); justify-items: center; padding: 3px 53px 0 45px; font-size: 15px; line-height: 20px; text-align: center; }
.cats li { width: 46px; }

.xp-scroll { display: flex; flex-direction: column; flex: none; width: 17px; border-left: 1px solid #eef2f8; border-right: 1px solid #e0ded4; background: linear-gradient(90deg, #f2f0e8, #fdfdfa); }
.xp-btn, .xp-thumb { display: flex; align-items: center; justify-content: center; border: 1px solid #98aee0; border-radius: 2px; background: #c4d4fc; box-shadow: inset 0 0 0 1px #e8f0ff; }
.xp-btn { height: 17px; }
.xp-btn svg { width: 10px; height: 8px; }
.xp-thumb { height: 153px; margin-top: 1px; }
.xp-thumb svg { width: 8px; height: 8px; }
.xp-next { height: 5px; margin-top: auto; background: #a9bcf2; }
.collapse { align-self: flex-start; flex: none; margin: 0 6px 0 3px; }
.collapse svg { width: 22px; height: 22px; }

/* footer */
.foot { display: flex; align-items: center; gap: 3px; height: 40px; flex: none; padding: 4px 82px 0 3px; color: #fff; }
.clock { display: flex; align-items: center; gap: 4px; margin-left: auto; }
.clock-ic { width: 32px; height: 20px; }

.page-scroll { display: flex; flex-direction: column; justify-content: space-between; width: 19px; padding: 1px 2px 2px 1px; border-top: 1px solid #8c8c84; background: #fefefa; }
.ps-btn { display: flex; align-items: center; justify-content: center; height: 16px; border: 1px solid #dedccf; border-radius: 2px; background: #f3f2ec; }
.ps-btn svg { width: 10px; height: 8px; }
.mouse { position: absolute; right: 5px; bottom: 129px; display: flex; align-items: center; justify-content: center; width: 50px; height: 50px; border-radius: 5px; background: rgba(0, 0, 0, .32); }
.mouse svg { width: 24px; height: 28px; }

/* browser status bar */
.status { display: flex; align-items: center; gap: 3px; height: 26px; padding: 0 1px 0 2px; border-top: 2px solid #fff; border-right: 4px solid #0a34c8; background: linear-gradient(#a8a598 1px, #f2f0e2 2px, #ece9d8 8px, #e8e4d0); }
.cells { display: flex; margin-left: auto; align-self: stretch; }
.cells i { width: 24px; margin: 3px 0 2px; border-left: 1px solid #c6c2ae; }
.zone { display: flex; align-items: center; gap: 4px; width: 158px; font: 14px/16px "Liberation Serif", serif; }
.lock, .zoom { display: flex; align-items: center; align-self: stretch; border-left: 1px solid #c6c2ae; font: 12px/16px "Liberation Serif", serif; }
.lock { width: 42px; padding-left: 5px; gap: 5px; }
.zoom { width: 74px; padding-left: 5px; gap: 2px; }
.zoom .tri { margin-left: 10px; }
.tri { width: 6px; height: 4px; }
.grip { width: 12px; height: 12px; align-self: flex-end; }

/* taskbar */
.taskbar { display: flex; flex: none; height: 32px; border-top: 3px solid #0a2fc4; background: linear-gradient(#5a96f4, #2a64e4 4px, #2257d8 22px, #1e50c4); color: #fff; }
.start { display: flex; align-items: center; gap: 7px; width: 93px; padding-left: 6px; border-radius: 0 9px 9px 0; background: linear-gradient(#7cc070, #3e9a38 5px, #389238 22px, #2a7a2a); font: italic 19px/24px "Noto Sans CJK SC", sans-serif; text-shadow: 1px 1px 1px #1c4c1c; }
.flag { width: 20px; height: 20px; }
.quick { display: flex; align-items: center; gap: 6px; width: 101px; padding-left: 11px; }
.more { align-self: flex-start; margin-left: 6px; font-size: 14px; }
.task { display: flex; align-items: center; gap: 3px; width: 159px; height: 25px; margin: 2px 1px 0 0; padding-left: 9px; border: 1px solid #3068d8; border-radius: 2px; background: linear-gradient(#6ca6fc, #3c80f4 5px, #3a7af0); }
.task-on { border-color: #12388c; background: #1c4cb4; }
.ime { display: flex; align-items: center; gap: 9px; margin-left: auto; padding-right: 7px; }
.ime-seal { width: 16px; border-radius: 5px; background: #e01818; font-size: 15px; line-height: 17px; }
.ic-rest { width: 10px; height: 16px; margin-left: 2px; }
.tray { display: flex; align-items: center; gap: 1px; width: 86px; background: linear-gradient(90deg, #2257d8 8px, #1ca0f0 9px, #128ce8); border-top: 1px solid #4cc0fc; }
.tray-more svg { width: 18px; height: 18px; }
.tray time { margin-left: 7px; }
```
